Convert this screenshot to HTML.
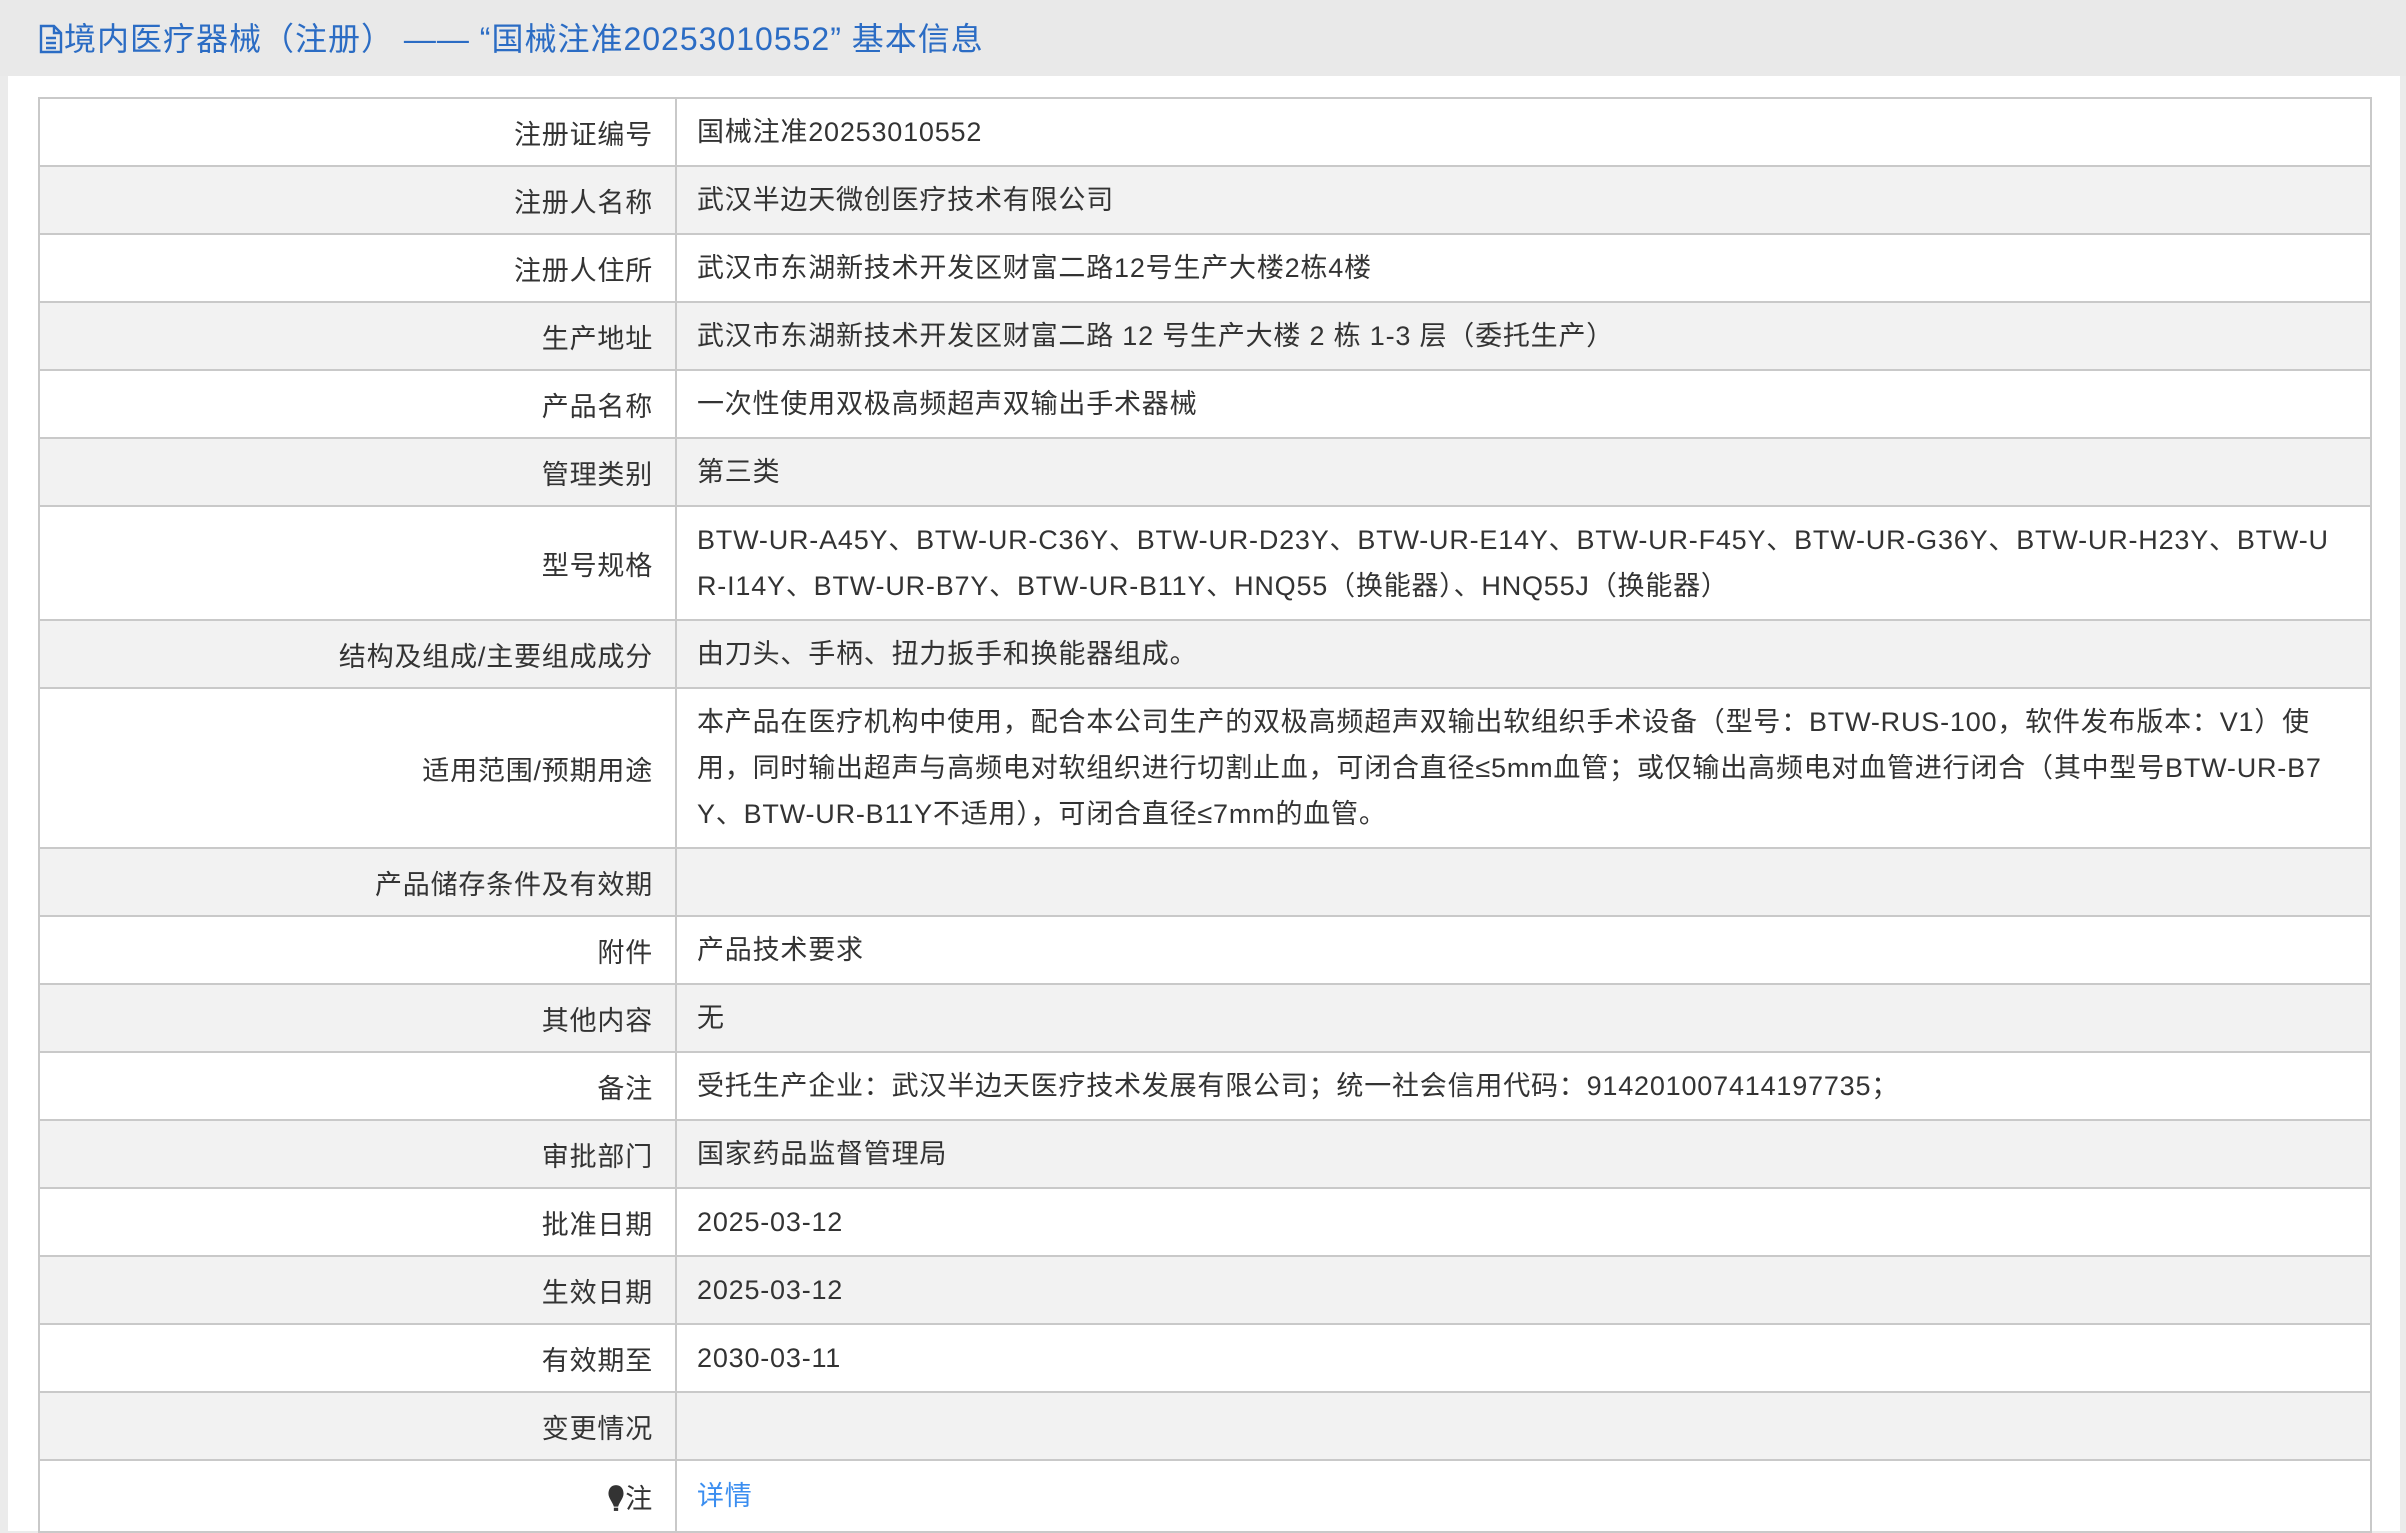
<!DOCTYPE html>
<html><head><meta charset="utf-8">
<style>
html,body{margin:0;padding:0;}
body{width:2406px;height:1531px;overflow:hidden;background:#ebebeb;font-family:"Liberation Sans","Noto Sans CJK SC",sans-serif;position:relative;}
.hdr{position:absolute;left:0;top:0;width:2406px;height:76px;background:#e9e9e9;}
.title{position:absolute;left:38px;top:16px;font-size:32px;letter-spacing:1px;line-height:46px;color:#2b6cc4;white-space:nowrap;}
.panel{position:absolute;left:8px;top:76px;width:2392px;height:1455px;background:#fff;}
table{position:absolute;left:38px;top:97px;width:2334px;border-collapse:collapse;font-size:27px;color:#333;letter-spacing:0.8px;}
td{border:2px solid #c9c9c9;padding:0;}
td.l{width:613px;text-align:right;padding-right:22px;}
td.v{padding-left:20px;line-height:46px;white-space:nowrap;}
tr{height:68px;}
tr:nth-child(even){background:#f2f2f2;}
a{color:#3b8ef0;text-decoration:none;}
</style></head><body>
<div class="hdr"><div class="title"><svg width="26" height="30" viewBox="0 0 26 30" style="vertical-align:-4px"><path d="M3 2h13l7 7v19H3z M16 2v7h7 M8 14h10M8 19h10M8 24h10" fill="none" stroke="#2b6cc4" stroke-width="2.4"/></svg>境内医疗器械（注册） —— “国械注准20253010552” 基本信息</div></div>
<div class="panel"></div>
<table>
<tr><td class="l">注册证编号</td><td class="v">国械注准20253010552</td></tr>
<tr><td class="l">注册人名称</td><td class="v">武汉半边天微创医疗技术有限公司</td></tr>
<tr><td class="l">注册人住所</td><td class="v">武汉市东湖新技术开发区财富二路12号生产大楼2栋4楼</td></tr>
<tr><td class="l">生产地址</td><td class="v">武汉市东湖新技术开发区财富二路 12 号生产大楼 2 栋 1-3 层（委托生产）</td></tr>
<tr><td class="l">产品名称</td><td class="v">一次性使用双极高频超声双输出手术器械</td></tr>
<tr><td class="l">管理类别</td><td class="v">第三类</td></tr>
<tr style="height:114px"><td class="l">型号规格</td><td class="v">BTW-UR-A45Y、BTW-UR-C36Y、BTW-UR-D23Y、BTW-UR-E14Y、BTW-UR-F45Y、BTW-UR-G36Y、BTW-UR-H23Y、BTW-U<br>R-I14Y、BTW-UR-B7Y、BTW-UR-B11Y、HNQ55（换能器）、HNQ55J（换能器）</td></tr>
<tr><td class="l">结构及组成/主要组成成分</td><td class="v">由刀头、手柄、扭力扳手和换能器组成。</td></tr>
<tr style="height:160px"><td class="l">适用范围/预期用途</td><td class="v">本产品在医疗机构中使用，配合本公司生产的双极高频超声双输出软组织手术设备（型号：BTW-RUS-100，软件发布版本：V1）使<br>用，同时输出超声与高频电对软组织进行切割止血，可闭合直径≤5mm血管；或仅输出高频电对血管进行闭合（其中型号BTW-UR-B7<br>Y、BTW-UR-B11Y不适用），可闭合直径≤7mm的血管。</td></tr>
<tr><td class="l">产品储存条件及有效期</td><td class="v"></td></tr>
<tr><td class="l">附件</td><td class="v">产品技术要求</td></tr>
<tr><td class="l">其他内容</td><td class="v">无</td></tr>
<tr><td class="l">备注</td><td class="v">受托生产企业：武汉半边天医疗技术发展有限公司；统一社会信用代码：914201007414197735；</td></tr>
<tr><td class="l">审批部门</td><td class="v">国家药品监督管理局</td></tr>
<tr><td class="l">批准日期</td><td class="v">2025-03-12</td></tr>
<tr><td class="l">生效日期</td><td class="v">2025-03-12</td></tr>
<tr><td class="l">有效期至</td><td class="v">2030-03-11</td></tr>
<tr><td class="l">变更情况</td><td class="v"></td></tr>
<tr style="height:72px"><td class="l"><svg width="18" height="28" viewBox="0 0 16 26" style="vertical-align:-4px"><path d="M8 1C3 1 1 5 1 9c0 4 4 8 5 12h4c1-4 5-8 5-12 0-4-2-8-7-8z" fill="#333"/><rect x="6" y="22" width="4" height="3" fill="#333"/></svg>注</td><td class="v"><a>详情</a></td></tr>
</table>
</body></html>
